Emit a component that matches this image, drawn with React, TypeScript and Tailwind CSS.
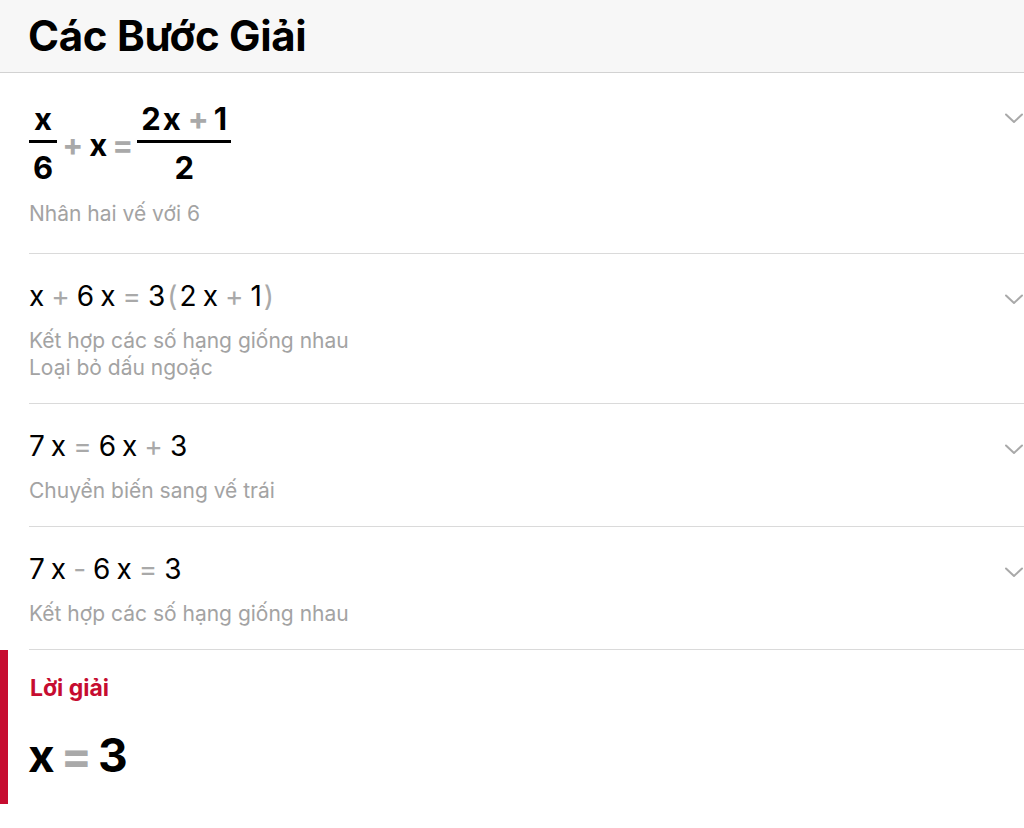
import React from "react";

const font = { fontFamily: "Inter, 'Noto Sans', sans-serif" };

function Chevron() {
  return (
    <svg width="18" height="11" viewBox="0 0 18 11" className="block">
      <path d="M1 1.5 L9 9 L17 1.5" fill="none" stroke="#a9a9a9" strokeWidth="2" strokeLinecap="round" strokeLinejoin="round" />
    </svg>
  );
}

function Op({ children }: { children: React.ReactNode }) {
  return <span className="text-[#a9a9a9] mx-[7px]">{children}</span>;
}

function Row({
  math,
  desc,
  mathClass,
  descClass,
  padClass,
}: {
  math: React.ReactNode;
  desc: string[];
  mathClass?: string;
  descClass?: string;
  padClass?: string;
}) {
  return (
    <div className="flex border-b border-[#dadada] ml-[29px]">
      <div className={"flex-1 " + (padClass ?? "pt-[25px] pb-[22px]")}>
        <div className={mathClass ?? "h-[34px] flex items-center text-[28px] leading-[34px] text-black font-normal"}>{math}</div>
        <div className={(descClass ?? "mt-[14px]") + " text-[21px] leading-[27px] text-[#a3a3a3]"}>
          {desc.map((d, i) => (
            <div key={i}>{d}</div>
          ))}
        </div>
      </div>
      <div className="w-[19px] pt-[40px] shrink-0">
        <Chevron />
      </div>
    </div>
  );
}

function Frac({ num, den }: { num: React.ReactNode; den: React.ReactNode }) {
  return (
    <span className="inline-flex flex-col items-center">
      <span className="px-[4px] leading-[34px] h-[42px] flex items-center">{num}</span>
      <span className="self-stretch h-[3px] bg-black" />
      <span className="px-[4px] leading-[34px] h-[50px] flex items-center">{den}</span>
    </span>
  );
}

export default function App() {
  return (
    <div className="w-[1024px] h-[828px] bg-white overflow-hidden" style={font}>
      <div className="h-[73px] bg-[#f7f7f7] border-b border-[#d2d2d2] flex items-center pl-[28px]">
        <h1 className="text-[42px] font-bold text-black tracking-[-0.3px] leading-none">Các Bước Giải</h1>
      </div>

      <Row
        padClass="pt-[25px] pb-[26px]"
        descClass="mt-[7px]"
        mathClass="flex items-center text-[31px] font-bold text-black h-[95px]"
        math={
          <>
            <Frac num="x" den="6" />
            <span className="text-[#a9a9a9] ml-[5px] mr-[6px]">+</span>
            <span>x</span>
            <span className="text-[#a9a9a9] ml-[5px] mr-[4px]">=</span>
            <Frac
              num={
                <span>
                  2<span className="ml-[2px]">x</span>
                  <span className="text-[#a9a9a9] ml-[7px] mr-[5px]">+</span>1
                </span>
              }
              den="2"
            />
          </>
        }
        desc={["Nhân hai vế với 6"]}
      />
      <Row
        math={
          <>
            <span>x</span>
            <Op>+</Op>
            <span>6</span>
            <span className="ml-[6px]">x</span>
            <Op>=</Op>
            <span>3</span>
            <span className="text-[#a9a9a9] mx-[2px]">(</span>
            <span>2</span>
            <span className="ml-[6px]">x</span>
            <Op>+</Op>
            <span>1</span>
            <span className="text-[#a9a9a9] ml-[2px]">)</span>
          </>
        }
        desc={["Kết hợp các số hạng giống nhau", "Loại bỏ dấu ngoặc"]}
      />
      <Row
        math={
          <>
            <span>7</span>
            <span className="ml-[6px]">x</span>
            <Op>=</Op>
            <span>6</span>
            <span className="ml-[6px]">x</span>
            <Op>+</Op>
            <span>3</span>
          </>
        }
        desc={["Chuyển biến sang vế trái"]}
      />
      <Row
        math={
          <>
            <span>7</span>
            <span className="ml-[6px]">x</span>
            <Op>-</Op>
            <span>6</span>
            <span className="ml-[6px]">x</span>
            <Op>=</Op>
            <span>3</span>
          </>
        }
        desc={["Kết hợp các số hạng giống nhau"]}
      />

      <div className="flex">
        <div className="w-[8px] h-[154px] bg-[#c60c30]" />
        <div className="pl-[22px] pt-[24px]">
          <div className="text-[23px] leading-[28px] font-bold text-[#c60c30]">Lời giải</div>
          <div className="mt-[28px] -ml-[2px] flex items-center text-[46px] leading-[50px] font-bold text-black">
            <span>x</span>
            <span className="text-[#a9a9a9] mx-[6px]">=</span>
            <span>3</span>
          </div>
        </div>
      </div>
    </div>
  );
}
